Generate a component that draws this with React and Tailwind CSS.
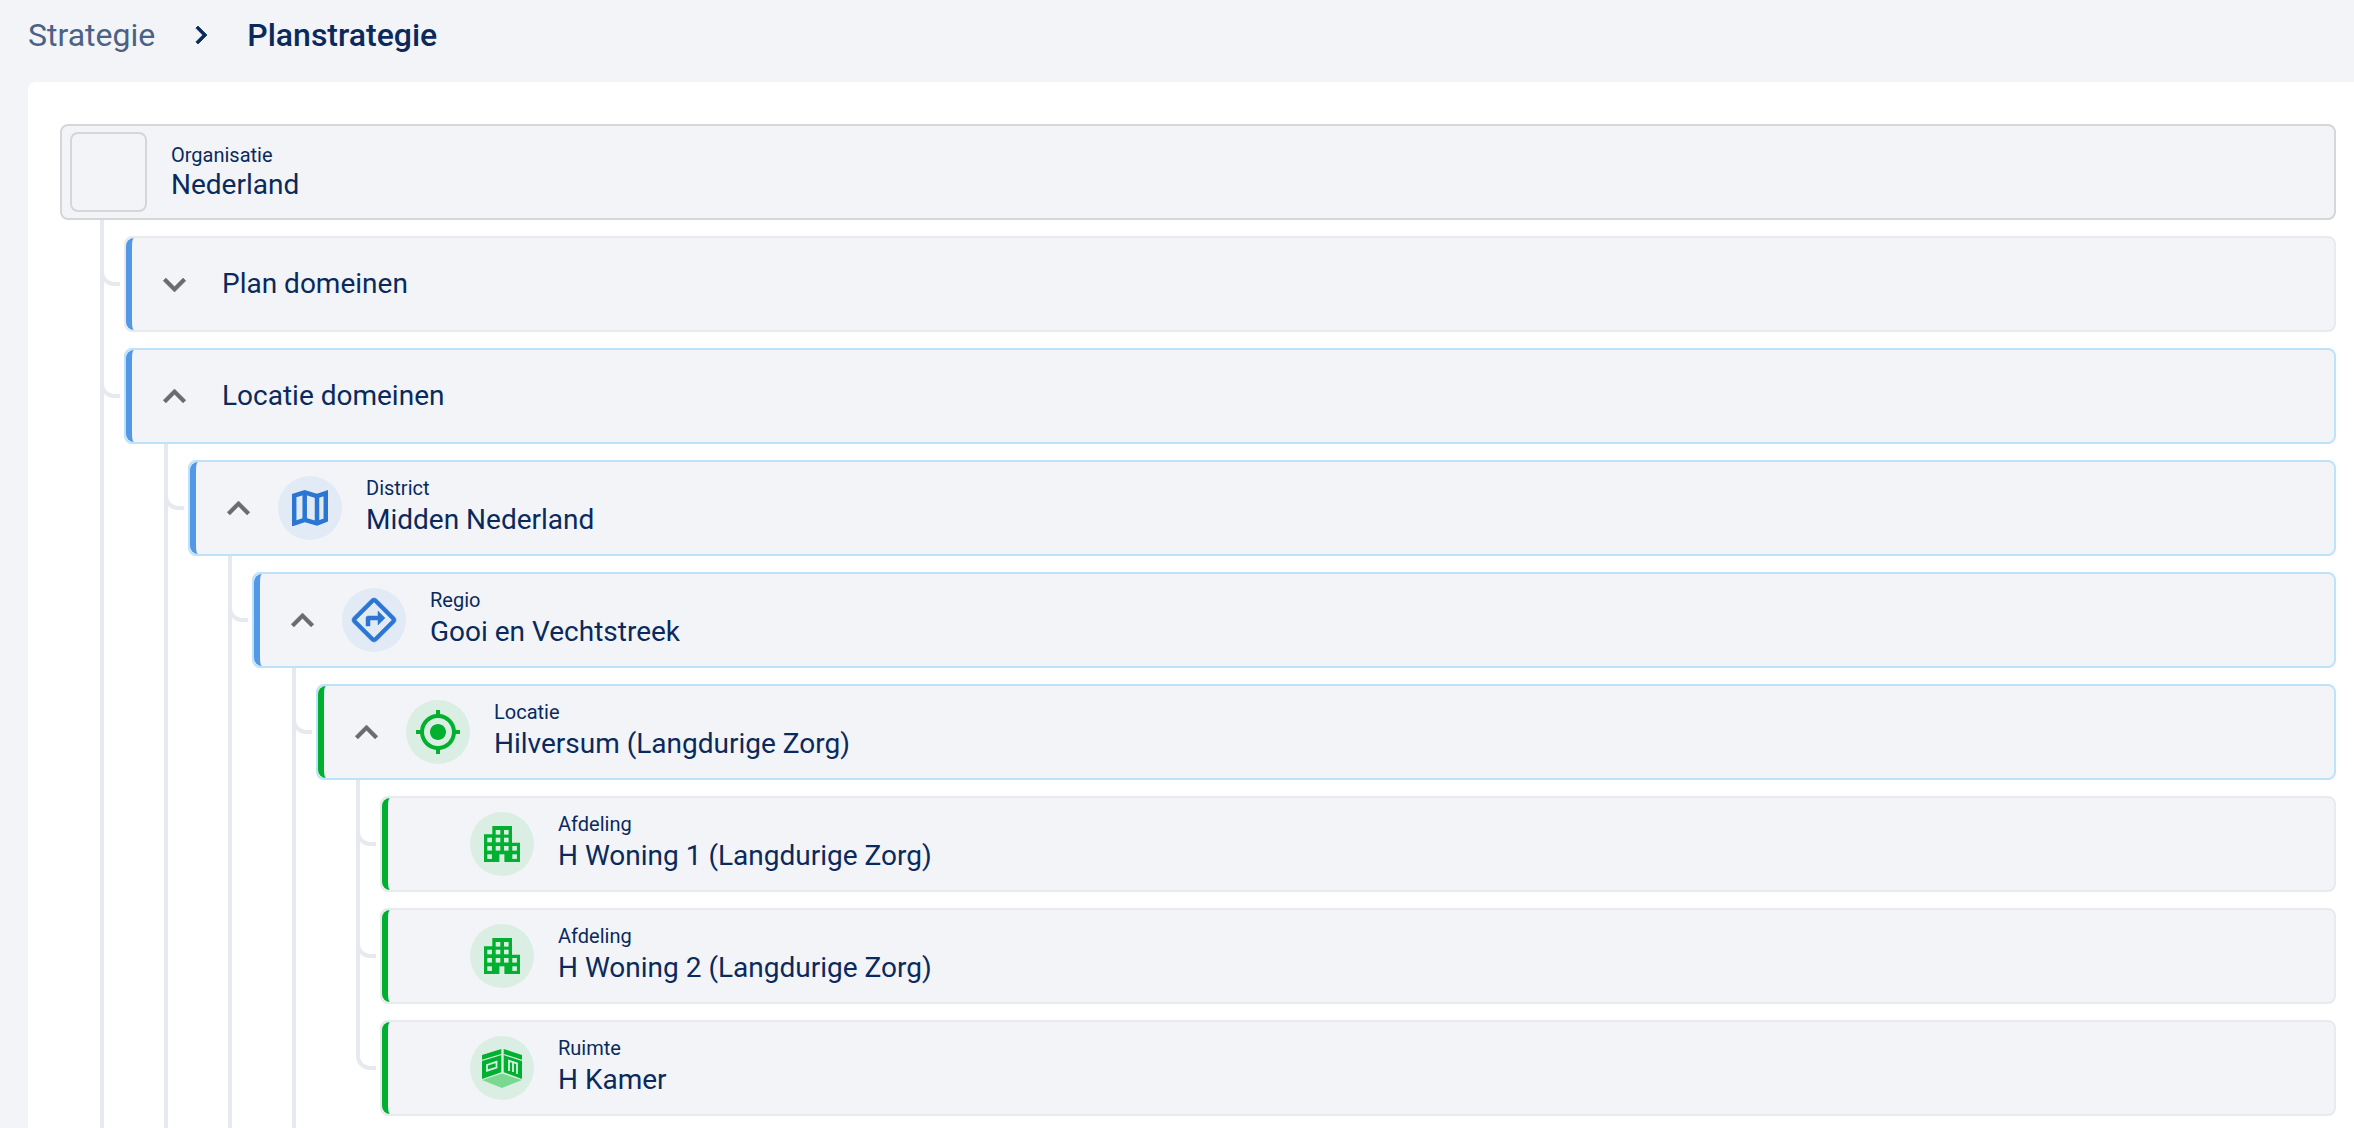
import React from "react";

const ChevronDown = () => (
  <svg viewBox="0 0 24 24" className="w-[45px] h-[45px] shrink-0 fill-[#6b6b6b] stroke-[#6b6b6b] stroke-[0.3px]">
    <path d="M16.59 8.59L12 13.17 7.41 8.59 6 10l6 6 6-6z" />
  </svg>
);

const ChevronUp = () => (
  <svg viewBox="0 0 24 24" className="w-[45px] h-[45px] shrink-0 fill-[#6b6b6b] stroke-[#6b6b6b] stroke-[0.3px]">
    <path d="M12 8l-6 6 1.41 1.41L12 10.83l4.59 4.58L18 14z" />
  </svg>
);

const MapIcon = () => (
  <svg viewBox="0 0 36 36" className="w-[36px] h-[36px] fill-none stroke-[#2b76d2] stroke-[4.5px]">
    <path d="M2.2 5.7L12.7 2.4L25 6.2L33.8 3.2V30L25 33.4L12.7 29.8L2.2 33.4Z" />
    <path d="M12.7 2V30M25 6V33.5" />
  </svg>
);

const DirectionIcon = () => (
  <svg viewBox="0 0 24 24" className="w-[48px] h-[48px] fill-[#2b76d2] stroke-[#2b76d2] stroke-[0.25px]">
    <path d="M22.43 10.59l-9.01-9.01c-.75-.75-2.07-.76-2.83 0l-9 9c-.78.78-.78 2.04 0 2.82l9 9c.39.39.9.58 1.41.58.51 0 1.02-.19 1.41-.58l8.99-8.99c.79-.76.8-2.02.03-2.82zm-10.42 10.4l-9-9 9-9 9 9-9 9zM8 11v4h2v-3h4v2.5l3.5-3.5L14 7.5V10H9c-.55 0-1 .45-1 1z" />
  </svg>
);

const TargetIcon = () => (
  <svg viewBox="0 0 24 24" className="w-[48px] h-[48px] fill-[#00b02e]">
    <path d="M12 8c-2.21 0-4 1.79-4 4s1.79 4 4 4 4-1.79 4-4-1.79-4-4-4zm8.94 3c-.46-4.17-3.77-7.48-7.94-7.94V1h-2v2.06C6.83 3.52 3.52 6.83 3.06 11H1v2h2.06c.46 4.17 3.77 7.48 7.94 7.94V23h2v-2.06c4.17-.46 7.48-3.77 7.94-7.94H23v-2h-2.06zM12 19c-3.87 0-7-3.13-7-7s3.13-7 7-7 7 3.13 7 7-3.13 7-7 7z" />
  </svg>
);

const BuildingIcon = () => {
  const windows = [
    [11.7, 4], [20, 4],
    [3.3, 11.7], [11.7, 11.7], [20, 11.7],
    [3.3, 20], [11.7, 20], [20, 20], [28.3, 20],
    [3.3, 28.3], [28.3, 28.3],
  ];
  return (
    <svg viewBox="0 0 36 36" className="w-[36px] h-[36px]">
      <path d="M0 8.3H8.3V0H28V16.7H36V36H0Z" className="fill-[#00b02e]" />
      {windows.map(([x, y], i) => (
        <rect key={i} x={x} y={y} width="4.6" height="4.6" className="fill-[#dbeee3]" />
      ))}
      <rect x="15.4" y="28.3" width="5" height="7.7" className="fill-[#dbeee3]" />
    </svg>
  );
};

const RoomIcon = () => (
  <svg viewBox="0 0 40 39" className="w-[40px] h-[39px]">
    <path d="M0 6L19.3 0V23.3L0 30Z" className="fill-[#00b02e]" />
    <path d="M21.7 0L40 6V30L21.7 23.3Z" className="fill-[#00b02e]" />
    <path d="M0 31L20 24.5L40 31L20 39Z" className="fill-[#7ad890]" />
    <path d="M0 11.5L19.3 5.5M21.7 5.5L40 11.5" className="fill-none stroke-[#dbeee3] stroke-[1.2px]" />
    <path d="M5 16L14.5 12.8V18.5L5 21.7Z" className="fill-none stroke-[#dbeee3] stroke-[1.8px]" />
    <path d="M27 22V11.8L35 14.5V25M31 13.5V23" className="fill-none stroke-[#dbeee3] stroke-[1.8px]" />
  </svg>
);

const Circle = ({ green, children }) => (
  <div
    className={`w-16 h-16 shrink-0 rounded-full flex items-center justify-center ${
      green ? "bg-[#dbeee3]" : "bg-[#e2eaf6]"
    }`}
  >
    {children}
  </div>
);

function Row({ node }) {
  const { label, title, accent, border, chevron, icon, green } = node;
  const accentClass = accent === "green" ? "border-l-[#00b02e]" : "border-l-[#5298e6]";
  const borderClass = border === "blue" ? "border-[#bde3fb]" : "border-[#e8eaee]";

  return (
    <div className={`h-24 rounded-lg border-2 bg-[#f2f4f8] ${borderClass}`}>
      <div className={`h-full rounded-lg border-l-[6px] pl-5 flex items-center ${accentClass}`}>
        <div className="w-[45px] shrink-0 mr-[17px]">
          {chevron === "down" && <ChevronDown />}
          {chevron === "up" && <ChevronUp />}
        </div>
        {icon ? (
          <>
            <Circle green={green}>{icon}</Circle>
            <div className="ml-6 pb-1">
              <div className="text-[20px] leading-6 mb-1">{label}</div>
              <div className="text-[28px] leading-8">{title}</div>
            </div>
          </>
        ) : (
          <div className="ml-2 text-[28px] leading-8">{title}</div>
        )}
      </div>
    </div>
  );
}

function Children({ node }) {
  return (
    <div className="pl-16 pt-4 flex flex-col gap-4">
      {node.children.map((child, i) => {
        const last = i === node.children.length - 1;
        return (
          <div key={i} className="relative">
            {!last && <div className="absolute -left-6 -top-4 bottom-0 w-1 bg-[#e6e9ef]" />}
            {last && node.more && <div className="absolute -left-6 -top-4 h-[1200px] w-1 bg-[#e6e9ef]" />}
            <div className="absolute -left-6 -top-4 w-5 h-[66px] border-l-4 border-b-4 border-[#e6e9ef] rounded-bl-[14px]" />
            <Row node={child} />
            {child.children && <Children node={child} />}
          </div>
        );
      })}
    </div>
  );
}

const tree = {
  more: true,
  children: [
    { title: "Plan domeinen", accent: "blue", border: "grey", chevron: "down" },
    {
      title: "Locatie domeinen",
      accent: "blue",
      border: "blue",
      chevron: "up",
      more: true,
      children: [
        {
          label: "District",
          title: "Midden Nederland",
          accent: "blue",
          border: "blue",
          chevron: "up",
          icon: <MapIcon />,
          more: true,
          children: [
            {
              label: "Regio",
              title: "Gooi en Vechtstreek",
              accent: "blue",
              border: "blue",
              chevron: "up",
              icon: <DirectionIcon />,
              more: true,
              children: [
                {
                  label: "Locatie",
                  title: "Hilversum (Langdurige Zorg)",
                  accent: "green",
                  border: "blue",
                  chevron: "up",
                  icon: <TargetIcon />,
                  green: true,
                  children: [
                    { label: "Afdeling", title: "H Woning 1 (Langdurige Zorg)", accent: "green", border: "grey", icon: <BuildingIcon />, green: true },
                    { label: "Afdeling", title: "H Woning 2 (Langdurige Zorg)", accent: "green", border: "grey", icon: <BuildingIcon />, green: true },
                    { label: "Ruimte", title: "H Kamer", accent: "green", border: "grey", icon: <RoomIcon />, green: true },
                  ],
                },
              ],
            },
          ],
        },
      ],
    },
  ],
};

export default function App() {
  return (
    <div className="h-screen overflow-hidden flex flex-col bg-[#f2f4f8] text-[#0a2a5c] font-['Roboto',sans-serif]">
      <div className="h-[82px] shrink-0 pl-7 pb-3 flex items-center">
        <span className="text-[32px] text-[#4a6285]">Strategie</span>
        <svg viewBox="0 0 24 24" className="w-9 h-9 mx-7 fill-[#0a2a5c] stroke-[#0a2a5c] stroke-[0.5px]">
          <path d="M10 6L8.59 7.41 13.17 12l-4.58 4.59L10 18l6-6z" />
        </svg>
        <span className="text-[32px] font-medium">Planstrategie</span>
      </div>
      <div className="flex-1 min-h-0 ml-7 pl-8 pr-[18px] pt-[42px] bg-white rounded-tl-lg">
        <div className="h-24 rounded-lg border-2 border-[#d5d6d8] bg-[#f2f4f8] pl-2 flex items-center">
          <div className="w-[77px] h-20 rounded-lg border-2 border-[#d5d6d8]" />
          <div className="ml-6">
            <div className="text-[20px] leading-6 mb-0.5">Organisatie</div>
            <div className="text-[28px] leading-8">Nederland</div>
          </div>
        </div>
        <Children node={tree} />
      </div>
    </div>
  );
}
